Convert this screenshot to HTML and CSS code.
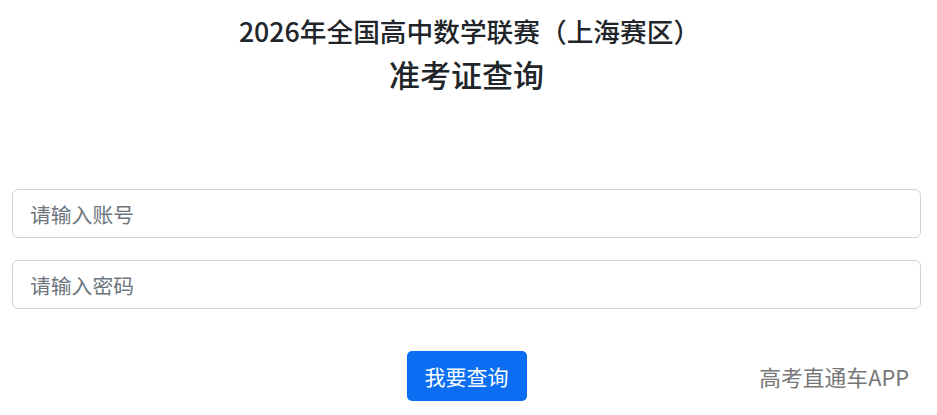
FILE: index.html
```html
<!DOCTYPE html>
<html lang="zh-CN">
<head>
<meta charset="utf-8">
<title>准考证查询</title>
<link rel="stylesheet" href="styles.css">
</head>
<body>
<div class="page">
  <header class="head">
    <h1 class="title">2026年全国高中数学联赛（上海赛区）</h1>
    <h2 class="subtitle">准考证查询</h2>
  </header>
  <form class="form">
    <input class="field" type="text" placeholder="请输入账号">
    <input class="field" type="password" placeholder="请输入密码">
    <div class="actions">
      <span></span>
      <button class="btn" type="button">我要查询</button>
      <span class="brand">高考直通车APP</span>
    </div>
  </form>
</div>
</body>
</html>
```

FILE: styles.css
```css
* { box-sizing: border-box; }
html, body { margin: 0; padding: 0; background: #fff; }
body {
  font-family: "Noto Sans CJK SC", "Noto Sans", sans-serif;
  color: #212529;
}
.page {
  padding: 0 16px 0 12px;
}
.head {
  display: flex;
  flex-direction: column;
  align-items: center;
  padding-top: 12px;
}
.title {
  margin: 0;
  padding-left: 6px;
  font-size: 26.7px;
  font-weight: 500;
  line-height: 38px;
}
.subtitle {
  margin: 2px 0 0;
  font-size: 31px;
  font-weight: 500;
  line-height: 44px;
}
.form {
  display: flex;
  flex-direction: column;
  gap: 22px;
  margin-top: 93px;
}
.field {
  display: block;
  width: 100%;
  height: 49px;
  padding: 0 17px;
  border: 1px solid #ced4da;
  border-radius: 6px;
  font-family: inherit;
  font-size: 20.8px;
  color: #212529;
  background: #fff;
  outline: none;
}
.field::placeholder { color: #6c757d; }
.actions {
  display: grid;
  grid-template-columns: 1fr auto 1fr;
  align-items: center;
  margin-top: 20px;
}
.btn {
  height: 50px;
  padding: 0 18px;
  border: none;
  border-radius: 5px;
  background: #0b6ef2;
  color: #fff;
  font-family: inherit;
  font-size: 21px;
}
.brand {
  justify-self: end;
  margin-right: 12px;
  font-size: 21.8px;
  color: #777;
}
```
